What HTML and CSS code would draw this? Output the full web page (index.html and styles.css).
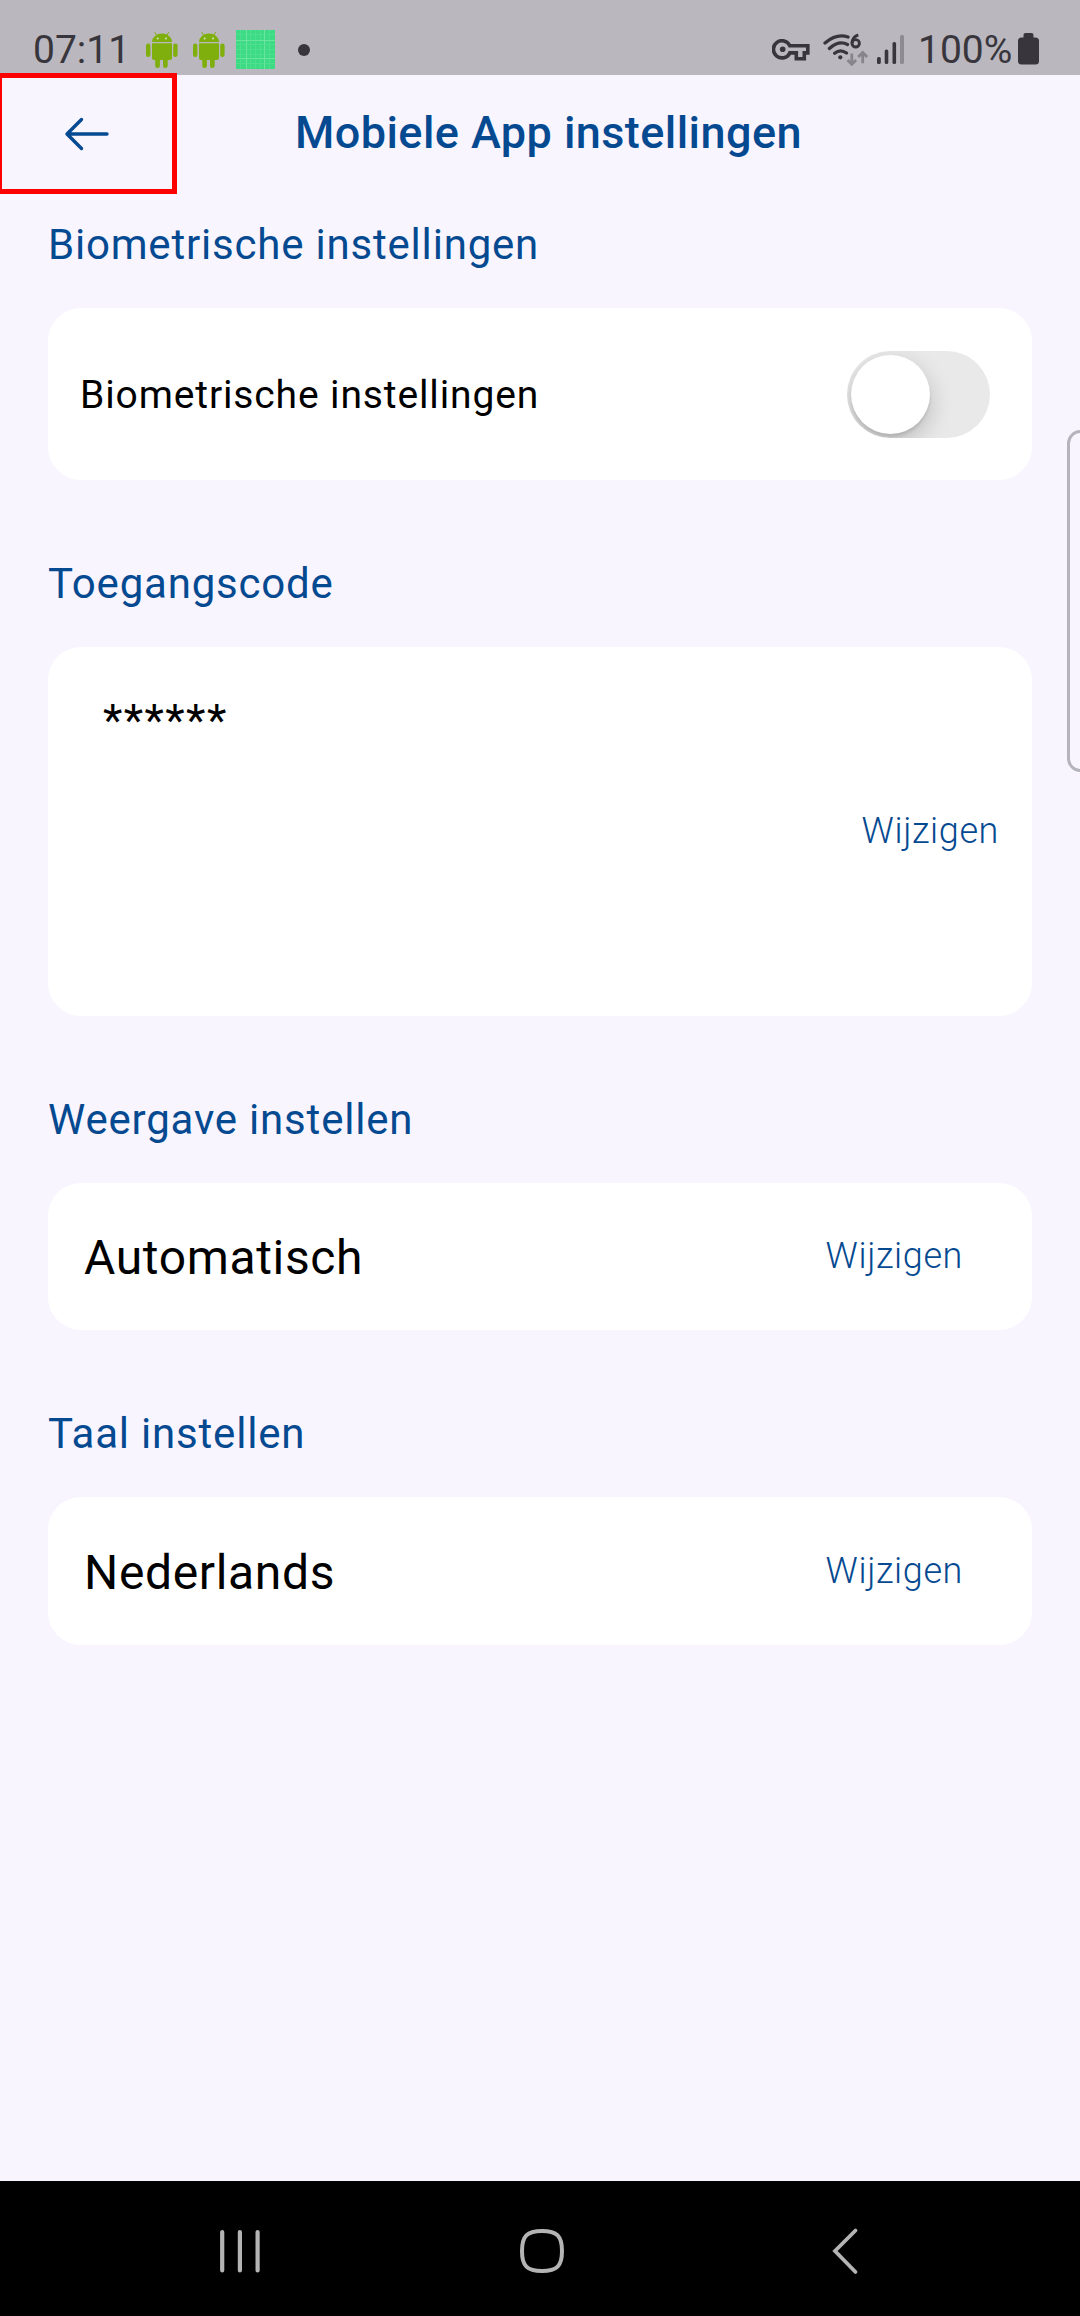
FILE: index.html
```html
<!DOCTYPE html>
<html lang="nl">
<head>
<meta charset="utf-8">
<title>Mobiele App instellingen</title>
<link rel="stylesheet" href="styles.css">
</head>
<body>
<div class="screen">
  <div class="status-bar">
    <div class="status-left">
      <span class="clock">07:11</span>
      <svg class="android" width="32" height="36" viewBox="0 0 32 36">
        <g fill="#7faf0d"><path d="M6 10a10 8.5 0 0 1 20 0z"/><path d="M6 11.3h20V26q0 2-2 2H8q-2 0-2-2z"/>
        <rect x="0" y="11.5" width="4.4" height="13.5" rx="2.2"/><rect x="27.2" y="11.5" width="4.4" height="13.5" rx="2.2"/>
        <rect x="9.2" y="24" width="4.7" height="12" rx="2.3"/><rect x="17" y="24" width="4.7" height="12" rx="2.3"/></g>
        <path d="M10.5 3L9 .5M21 3L22.5 .5" stroke="#7faf0d" stroke-width="1" stroke-linecap="round"/>
        <circle cx="11.7" cy="6.4" r="1" fill="#d5dfb9"/><circle cx="20" cy="6.4" r="1" fill="#d5dfb9"/>
      </svg>
      <svg class="android" width="32" height="36" viewBox="0 0 32 36">
        <g fill="#7faf0d"><path d="M6 10a10 8.5 0 0 1 20 0z"/><path d="M6 11.3h20V26q0 2-2 2H8q-2 0-2-2z"/>
        <rect x="0" y="11.5" width="4.4" height="13.5" rx="2.2"/><rect x="27.2" y="11.5" width="4.4" height="13.5" rx="2.2"/>
        <rect x="9.2" y="24" width="4.7" height="12" rx="2.3"/><rect x="17" y="24" width="4.7" height="12" rx="2.3"/></g>
        <path d="M10.5 3L9 .5M21 3L22.5 .5" stroke="#7faf0d" stroke-width="1" stroke-linecap="round"/>
        <circle cx="11.7" cy="6.4" r="1" fill="#d5dfb9"/><circle cx="20" cy="6.4" r="1" fill="#d5dfb9"/>
      </svg>
      <svg class="grid-icon" width="39" height="39" viewBox="0 0 39 39">
        <path fill="#3ddc84" d="M0 0h39v39H0z"/>
        <path d="M10.5 0v39M28.5 0v39M0 10.5h39M0 28.5h39" stroke="#78e6aa" stroke-width=".8" fill="none"/>
        <path d="M4.5 0v39M14.5 0v39M19.5 0v39M24.5 0v39M33.5 0v39M0 4.5h39M0 14.5h39M0 19.5h39M0 24.5h39M0 33.5h39" stroke="#55e095" stroke-width=".7" fill="none"/>
      </svg>
      <span class="dot"></span>
    </div>
    <div class="status-right">
      <svg width="38" height="22" viewBox="771 39.5 38 22" fill="none" stroke="#38363c">
        <path d="M788.8 46.2h18v7.2h-3.5v5.8h-8v-5.8h-6.5a8.6 8.6 0 1 1 0-7.2z" stroke-width="3.6"/>
        <circle cx="781.7" cy="49.8" r="2.8" fill="#38363c" stroke="none"/>
      </svg>
      <svg class="wifi" width="46" height="34" viewBox="822 33 46 34" fill="none" stroke="#38363c" stroke-width="3.3">
        <path d="M824 43Q835.500 33.200 847 37M828.400 48.500Q838 40 846.500 44.500M833.700 53.200Q839.300 48.600 845.500 53" stroke-linecap="round"/>
        <circle cx="839.3" cy="57.3" r="2.1" fill="#38363c" stroke="none"/>
        <path d="M857.300 34.800Q851 37 851 43.300" stroke-width="2.9"/><circle cx="854.7" cy="43.300" r="3.700" stroke-width="2.9"/>
        <g stroke="#87858b" stroke-width="2.8"><path d="M850.8 53.5V64M846.5 60l4.3 4.3 4.3-4.3M861.7 63.3V52.5M857.2 57l4.5-4.5 4.5 4.5"/></g>
      </svg>
      <svg class="signal" width="28" height="30" viewBox="876 35 28 30">
        <g fill="#38363c"><rect x="876" y="57" width="3.8" height="7" rx="1.6"/><rect x="883.7" y="49.5" width="3.6" height="14.5" rx="1.6"/><rect x="891.5" y="42" width="3.6" height="22" rx="1.6"/></g>
        <rect x="899" y="35" width="4" height="29" rx="1.6" fill="#8d8a91"/>
      </svg>
      <span class="battery-text">100%</span>
      <svg class="battery" width="21" height="32" viewBox="0 0 21 32" fill="#38363c"><rect y="4.5" width="21" height="27" rx="3.5"/><path d="M5.5 6V2Q5.5 0 7.5 0h6Q15.5 0 15.5 2v4z"/></svg>
    </div>
  </div>

  <header class="app-bar">
    <svg class="back" width="46" height="36" viewBox="64 115.5 46 36" fill="none" stroke="#054a91" stroke-width="3.4" stroke-linecap="round" stroke-linejoin="round"><path d="M107 133.5H67M81.5 119L67 133.5 81.5 148"/></svg>
    <h1 class="title">Mobiele App instellingen</h1>
    <div class="highlight"></div>
  </header>

  <main class="content">
    <section>
      <h2 class="heading">Biometrische instellingen</h2>
      <div class="card card-toggle">
        <span class="toggle-label">Biometrische instellingen</span>
        <div class="toggle"><div class="knob"></div></div>
      </div>
    </section>
    <section>
      <h2 class="heading">Toegangscode</h2>
      <div class="card card-code">
        <span class="code">******</span>
        <a class="change">Wijzigen</a>
      </div>
    </section>
    <section>
      <h2 class="heading">Weergave instellen</h2>
      <div class="card card-choice">
        <span class="choice">Automatisch</span>
        <a class="change">Wijzigen</a>
      </div>
    </section>
    <section>
      <h2 class="heading">Taal instellen</h2>
      <div class="card card-choice">
        <span class="choice">Nederlands</span>
        <a class="change">Wijzigen</a>
      </div>
    </section>
  </main>
  <div class="edge-handle"></div>

  <nav class="nav-bar">
    <svg width="42" height="46" viewBox="219 2228 42 46" stroke="#b4b4b4" stroke-width="4.2" stroke-linecap="round"><path d="M222.2 2232v38.500M239.900 2232v38.500M257.600 2232v38.500"/></svg>
    <svg class="home" width="46" height="46" viewBox="0 0 46 46" fill="none" stroke="#b4b4b4" stroke-width="4"><path d="M23 3C38 3 43 8 43 23S38 43 23 43 3 38 3 23 8 3 23 3z"/></svg>
    <svg class="nav-back" width="28" height="48" viewBox="831 2227 28 48" fill="none" stroke="#b4b4b4" stroke-width="3.8" stroke-linecap="round"><path d="M855.500 2230.500L835 2251l20.500 21"/></svg>
  </nav>
</div>
</body>
</html>
```
FILE: styles.css
```css
* { box-sizing: border-box; }
body { margin: 0; font-family: Roboto, "Liberation Sans", sans-serif; }
svg { display: block; flex: none; }
h1, h2 { margin: 0; }
.screen {
  position: relative;
  display: flex;
  flex-direction: column;
  width: 1080px;
  height: 2316px;
  overflow: hidden;
  background: #f8f5ff;
  white-space: nowrap;
}

.status-bar {
  display: flex;
  justify-content: space-between;
  height: 75px;
  padding: 0 41px 0 33px;
  background: #bab7be;
  color: #38363c;
}
.status-left, .status-right { display: flex; align-items: center; padding-top: 24px; }
.clock { width: 113px; padding-top: 1px; font-size: 39px; line-height: 51px; }
.android { margin-right: 15px; }
.grid-icon { margin-left: -4px; }
.dot { width: 12px; height: 12px; margin-left: 23px; border-radius: 50%; background: #38363c; }
.wifi { margin-left: 13px; }
.signal { margin-left: 8px; }
.battery-text { width: 100px; margin-left: 13px; padding-top: 1px; font-size: 39px; line-height: 51px; }
.battery { margin-top: -2px; }

.app-bar {
  position: relative;
  display: flex;
  align-items: center;
  height: 115px;
  padding-left: 64px;
  color: #054a91;
}
.back { margin-top: 2px; }
.title { margin-left: 185px; font-size: 45px; font-weight: 500; line-height: 60px; letter-spacing: 0.43px; }
.highlight {
  position: absolute;
  left: -3px;
  top: -2px;
  width: 180px;
  height: 121px;
  border: 5px solid #f00;
}

.content {
  display: flex;
  flex: 1;
  flex-direction: column;
  gap: 79px;
  padding: 30px 48px 0;
}
.heading {
  margin-bottom: 38px;
  color: #054a91;
  font-size: 42px;
  font-weight: 400;
  line-height: 50px;
  letter-spacing: 0.8px;
}
.card {
  display: flex;
  align-items: center;
  justify-content: space-between;
  border-radius: 33px;
  background: #fff;
  color: #000;
}
.card-toggle { height: 172.400px; padding: 0 42px 0 32px; }
.toggle-label { padding-top: 2px; font-size: 39px; letter-spacing: 0.87px; }
.toggle {
  width: 143px;
  height: 87px;
  padding: 4px;
  overflow: hidden;
  border-radius: 44px;
  background: #e9e9e9;
}
.knob {
  width: 79px;
  height: 79px;
  border-radius: 50%;
  background: #fff;
  box-shadow: 0 9px 24px rgba(0, 0, 0, .2), 0 3px 3px rgba(0, 0, 0, .1);
}
.card-code { height: 368.300px; padding: 0 33px 0 55px; }
.code { align-self: flex-start; margin-top: 46px; font-size: 45px; line-height: 56px; letter-spacing: 1.4px; }
.change { color: #054a91; font-size: 36px; font-weight: 300; line-height: 44px; letter-spacing: 0.6px; }
.card-code .change { margin-top: -2px; }
.card-choice { height: 147.800px; padding: 0 69px 0 36px; }
.choice { padding-top: 3px; font-size: 48px; line-height: 60px; letter-spacing: 0.65px; }
.card-choice .change { margin-top: -1px; }

.edge-handle {
  position: absolute;
  top: 430px;
  right: -14px;
  width: 27px;
  height: 342px;
  border: 3px solid #b5b3bb;
  border-radius: 14px;
}

.nav-bar {
  display: flex;
  align-items: center;
  height: 135px;
  padding: 5px 0 0 219px;
  background: #000;
}
.home { margin-left: 258px; }
.nav-back { margin-left: 266px; }
```
